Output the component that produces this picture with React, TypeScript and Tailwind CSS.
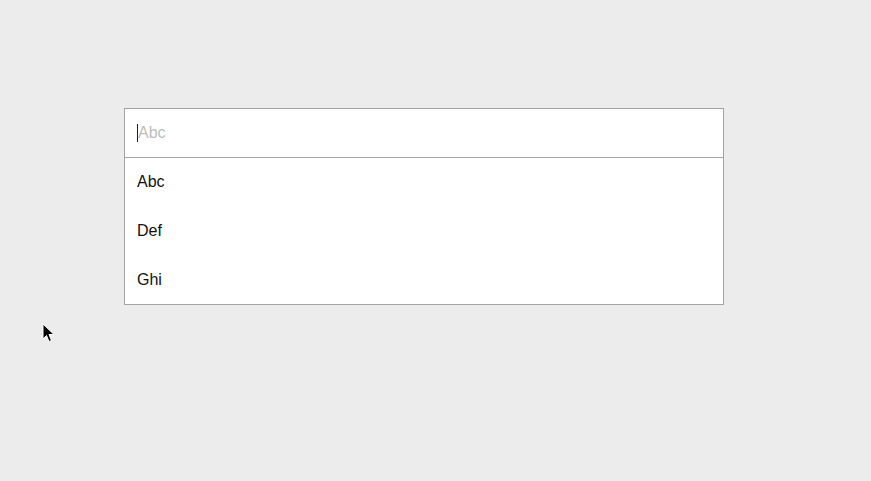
export default function App() {
  const items = ["Abc", "Def", "Ghi"];

  return (
    <div className="relative min-h-screen bg-[#ececec] pt-[108px] pl-[124px] font-['Liberation_Sans',Arial,sans-serif]">
      <div className="w-[600px] border border-[#a3a3a3] bg-white">
        {/* search field */}
        <div className="flex h-[49px] items-center border-b border-[#a3a3a3] pl-3 text-[16px]">
          <span className="h-[18px] w-px bg-[#222]" />
          <span className="text-[#bdbdbd]">Abc</span>
        </div>
        {/* options */}
        <ul className="flex flex-col">
          {items.map((item) => (
            <li key={item} className="flex h-[49px] items-center pb-[2px] pl-3 text-[16px] text-[#111] last:h-[48px] last:pb-0">
              {item}
            </li>
          ))}
        </ul>
      </div>

      {/* mouse pointer */}
      <svg className="absolute left-[42px] top-[323px]" width="13" height="20" viewBox="0 0 13 20">
        <path d="M1 1 L1 16 L4.5 12.5 L7 18.5 L9.5 17.5 L7 11.5 L12 11.5 Z" fill="#000" stroke="#fff" strokeWidth="1" strokeLinejoin="round" />
      </svg>
    </div>
  );
}
